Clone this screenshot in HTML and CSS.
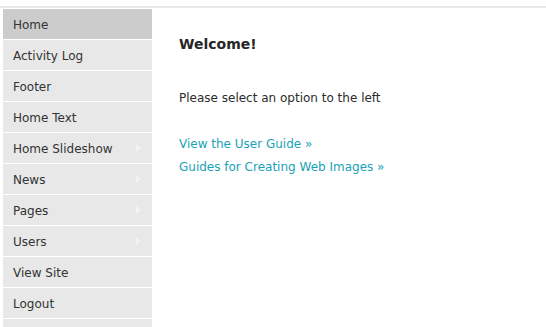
FILE: index.html
```html
<!DOCTYPE html>
<html>
<head>
<meta charset="utf-8">
<link rel="stylesheet" href="styles.css">
</head>
<body>
<div class="topline"></div>
<div class="layout">
  <ul class="sidebar">
    <li class="item active">Home</li>
    <li class="item">Activity Log</li>
    <li class="item">Footer</li>
    <li class="item">Home Text</li>
    <li class="item has-sub">Home Slideshow</li>
    <li class="item has-sub">News</li>
    <li class="item has-sub">Pages</li>
    <li class="item has-sub">Users</li>
    <li class="item">View Site</li>
    <li class="item">Logout</li>
    <li class="item"></li>
  </ul>
  <div class="main">
    <h1 class="title">Welcome!</h1>
    <p class="intro">Please select an option to the left</p>
    <div class="links">
      <a class="link" href="#">View the User Guide »</a>
      <a class="link" href="#">Guides for Creating Web Images »</a>
    </div>
  </div>
</div>
</body>
</html>
```

FILE: styles.css
```css
html, body {
  margin: 0;
  padding: 0;
  background: #ffffff;
  font-family: "DejaVu Sans", Verdana, sans-serif;
  color: #2b2b2b;
  overflow: hidden;
}
.topline {
  height: 2px;
  margin-top: 6px;
  background: #e8e8e8;
}
.layout {
  display: flex;
  margin-top: 1px;
  height: 318px;
  overflow: hidden;
}
.sidebar {
  list-style: none;
  margin: 0 0 0 3px;
  padding: 0;
  width: 149px;
  flex: none;
}
.item {
  position: relative;
  box-sizing: border-box;
  height: 31px;
  padding-top: 1px;
  line-height: 30px;
  padding-left: 10px;
  font-size: 12px;
  color: #333333;
  background: #e8e8e8;
  border-bottom: 1px solid #ffffff;
  overflow: hidden;
}
.item.active {
  background: #cccccc;
}
.item.has-sub::after {
  content: "";
  position: absolute;
  left: 133px;
  top: 11px;
  border-style: solid;
  border-width: 4px 0 4px 5px;
  border-color: transparent transparent transparent #f3f3f3;
}
.main {
  padding-left: 27px;
  padding-top: 26px;
}
.title {
  margin: 0;
  font-size: 14px;
  line-height: 18px;
  font-weight: bold;
  color: #262626;
}
.intro {
  margin: 38px 0 0 0;
  font-size: 12px;
  line-height: 15px;
}
.links {
  margin-top: 27px;
  display: flex;
  flex-direction: column;
}
.link {
  font-size: 12px;
  line-height: 23px;
  color: #1aa2b6;
  text-decoration: none;
}
```
